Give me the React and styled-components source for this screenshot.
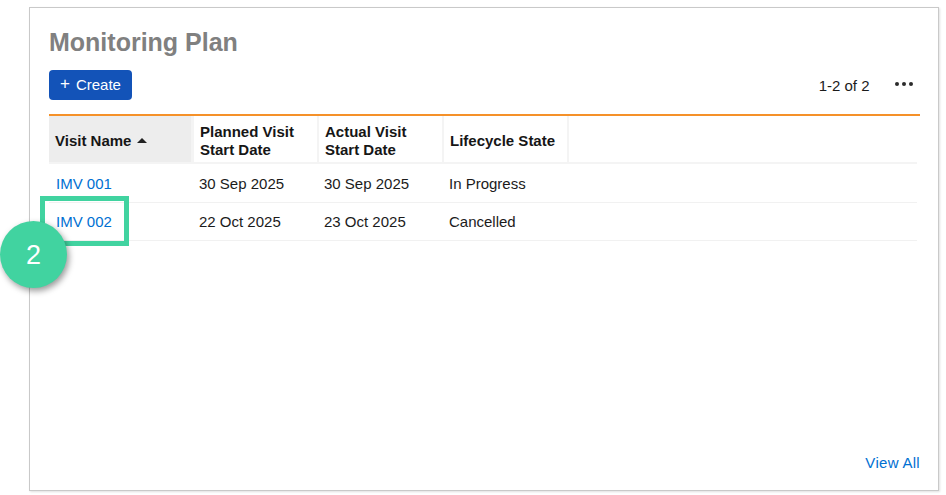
import React from "react";
import styled, { createGlobalStyle } from "styled-components";

const Global = createGlobalStyle`
  html, body {
    margin: 0;
    padding: 0;
    background: #fff;
    font-family: "Liberation Sans", Arial, sans-serif;
  }
`;

const columns = [
  { key: "name", label: "Visit Name", width: 142, sorted: true },
  { key: "planned", label: ["Planned Visit", "Start Date"], width: 123 },
  { key: "actual", label: ["Actual Visit", "Start Date"], width: 123 },
  { key: "state", label: "Lifecycle State", width: 123 },
];

const visits = [
  { name: "IMV 001", planned: "30 Sep 2025", actual: "30 Sep 2025", state: "In Progress" },
  { name: "IMV 002", planned: "22 Oct 2025", actual: "23 Oct 2025", state: "Cancelled" },
];

const App = () => {
  return (
    <Page>
      <Global />
      <Card>
        <Title>Monitoring Plan</Title>
        <Toolbar>
          <CreateButton>
            <span className="plus">+</span>
            <span>Create</span>
          </CreateButton>
          <Pager>
            <span>1-2 of 2</span>
            <Dots>
              <i />
              <i />
              <i />
            </Dots>
          </Pager>
        </Toolbar>
        <Table>
          <HeaderRow>
            {columns.map((col) => (
              <HeaderCell key={col.key} $width={col.width} $sorted={col.sorted}>
                <div>
                  {Array.isArray(col.label)
                    ? col.label.map((line) => <div key={line}>{line}</div>)
                    : col.label}
                </div>
                {col.sorted && <SortArrow />}
              </HeaderCell>
            ))}
            <HeaderCell $fill />
          </HeaderRow>
          {visits.map((visit) => (
            <Row key={visit.name}>
              <NameCell>
                <VisitLink href="#">{visit.name}</VisitLink>
              </NameCell>
              <Cell>{visit.planned}</Cell>
              <Cell>{visit.actual}</Cell>
              <Cell>{visit.state}</Cell>
            </Row>
          ))}
        </Table>
        <Footer>
          <ViewAll href="#">View All</ViewAll>
        </Footer>
      </Card>
      <Highlight />
      <StepBadge>2</StepBadge>
    </Page>
  );
};

export default App;

const Page = styled.div`
  position: relative;
  width: 946px;
  height: 495px;
  padding: 7px 7px 4px 29px;
  box-sizing: border-box;
  overflow: hidden;
`;

const Card = styled.div`
  display: flex;
  flex-direction: column;
  height: 100%;
  box-sizing: border-box;
  padding: 20px 18px 19px 19px;
  background: #fff;
  border: 1px solid #c9c9c9;
  box-shadow: 1px 1px 2px rgba(0, 0, 0, 0.12);
`;

const Title = styled.h2`
  margin: 0;
  font-size: 25px;
  line-height: 29px;
  font-weight: bold;
  color: #808080;
`;

const Toolbar = styled.div`
  display: flex;
  justify-content: space-between;
  align-items: center;
  margin-top: 13px;
  height: 30px;
`;

const CreateButton = styled.button`
  display: flex;
  align-items: center;
  gap: 6px;
  width: 83px;
  height: 30px;
  padding: 0 0 2px 11px;
  border: none;
  border-radius: 4px;
  background: #1353b8;
  color: #fff;
  font-family: inherit;
  font-size: 15px;
  .plus {
    font-size: 17px;
  }
`;

const Pager = styled.div`
  display: flex;
  align-items: center;
  gap: 25px;
  padding-right: 7px;
  font-size: 15px;
  color: #1b1b1b;
`;

const Dots = styled.div`
  display: flex;
  gap: 2.5px;
  margin-bottom: 2px;
  i {
    width: 4.5px;
    height: 4.5px;
    border-radius: 50%;
    background: #2b2b2b;
  }
`;

const Table = styled.div`
  margin-top: 14px;
  border-top: 2px solid #f59129;
`;

const HeaderRow = styled.div`
  display: flex;
  gap: 2px;
  width: 868px;
  height: 48px;
  padding-bottom: 2px;
  box-sizing: border-box;
  background: #f4f4f4;
`;

const HeaderCell = styled.div`
  display: flex;
  align-items: center;
  gap: 6px;
  box-sizing: border-box;
  width: ${(p) => (p.$width ? p.$width + "px" : "auto")};
  flex: ${(p) => (p.$fill ? 1 : "none")};
  margin-right: ${(p) => (p.$sorted ? "1px" : "0")};
  padding: 4px 0 0 6px;
  background: ${(p) => (p.$sorted ? "#ededed" : "#fff")};
  font-size: 15px;
  line-height: 18px;
  font-weight: bold;
  color: #161616;
`;

const SortArrow = styled.span`
  width: 0;
  height: 0;
  margin-top: -1px;
  border-left: 5px solid transparent;
  border-right: 5px solid transparent;
  border-bottom: 5px solid #222;
`;

const Row = styled.div`
  display: flex;
  width: 868px;
  height: 38px;
  box-sizing: border-box;
  align-items: center;
  border-bottom: 1px solid #f1f1f1;
  font-size: 15px;
  color: #1b1b1b;
  &:nth-child(2) {
    height: 39px;
    padding-top: 1px;
  }
`;

const NameCell = styled.div`
  width: 144px;
  padding-left: 7px;
  box-sizing: border-box;
`;

const Cell = styled.div`
  width: 125px;
  padding-left: 6px;
  box-sizing: border-box;
`;

const VisitLink = styled.a`
  color: #0070d2;
  text-decoration: none;
`;

const Footer = styled.div`
  display: flex;
  justify-content: flex-end;
  margin-top: auto;
`;

const ViewAll = styled.a`
  font-size: 15px;
  letter-spacing: 0.3px;
  color: #0070d2;
  text-decoration: none;
`;

const Highlight = styled.div`
  position: absolute;
  left: 40px;
  top: 196px;
  width: 89px;
  height: 50px;
  box-sizing: border-box;
  border: 5px solid #41d3a0;
`;

const StepBadge = styled.div`
  position: absolute;
  left: 0;
  top: 221px;
  width: 67px;
  height: 67px;
  padding-top: 1px;
  box-sizing: border-box;
  display: flex;
  align-items: center;
  justify-content: center;
  border-radius: 50%;
  background: #41d3a0;
  color: #fff;
  font-size: 27px;
  box-shadow: 2px 3px 6px rgba(0, 0, 0, 0.4);
`;
